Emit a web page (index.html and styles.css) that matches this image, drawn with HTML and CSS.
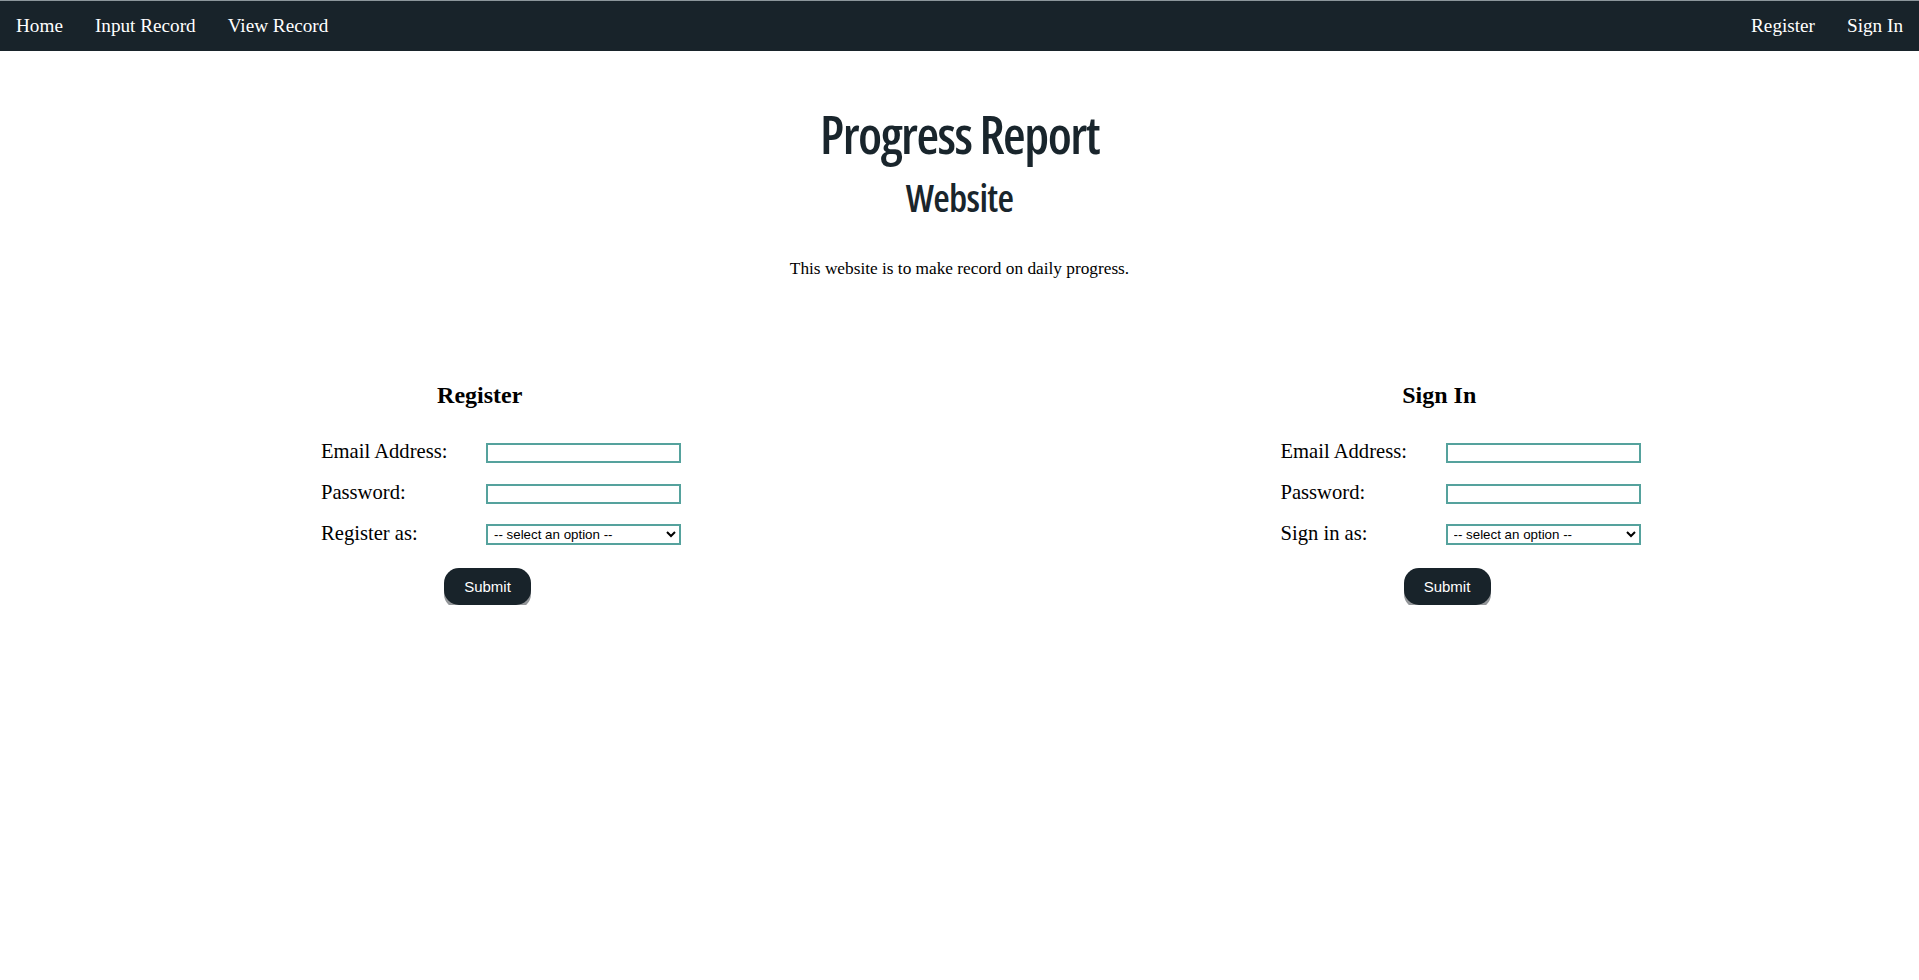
FILE: index.html
```html
<!DOCTYPE html>
<html lang="en">
<head>
<meta charset="utf-8">
<title>Progress Report Website</title>
<link rel="stylesheet" href="styles.css">
</head>
<body>
<nav class="topnav">
  <div class="nav-left">
    <a class="nav-link" href="#">Home</a>
    <a class="nav-link" href="#">Input Record</a>
    <a class="nav-link" href="#">View Record</a>
  </div>
  <div class="nav-right">
    <a class="nav-link" href="#">Register</a>
    <a class="nav-link" href="#">Sign In</a>
  </div>
</nav>

<header class="hero">
  <h1 class="hero-title">Progress Report</h1>
  <h2 class="hero-sub">Website</h2>
  <p class="hero-text">This website is to make record on daily progress.</p>
</header>

<main class="forms">
  <section class="form-col">
    <h2 class="form-title">Register</h2>
    <form class="form-grid">
      <label class="form-label">Email Address:</label>
      <input class="form-input" type="email">
      <label class="form-label">Password:</label>
      <input class="form-input" type="password">
      <label class="form-label">Register as:</label>
      <select class="form-select">
        <option>-- select an option --</option>
      </select>
      <button class="submit-btn" type="button">Submit</button>
    </form>
  </section>
  <section class="form-col">
    <h2 class="form-title">Sign In</h2>
    <form class="form-grid">
      <label class="form-label">Email Address:</label>
      <input class="form-input" type="email">
      <label class="form-label">Password:</label>
      <input class="form-input" type="password">
      <label class="form-label">Sign in as:</label>
      <select class="form-select">
        <option>-- select an option --</option>
      </select>
      <button class="submit-btn" type="button">Submit</button>
    </form>
  </section>
</main>
</body>
</html>
```

FILE: styles.css
```css
* { box-sizing: border-box; }

body {
  margin: 0;
  background: #ffffff;
  font-family: "Liberation Serif", "Times New Roman", serif;
  color: #000;
}

.topnav {
  height: 51px;
  background: #18232a;
  border-top: 1px solid #8c969b;
  display: flex;
  justify-content: space-between;
  align-items: center;
}

.nav-left, .nav-right {
  display: flex;
  align-items: center;
}

.nav-link {
  color: #ffffff;
  text-decoration: none;
  font-size: 19.2px;
  line-height: 22px;
  padding: 0 16px;
}

.hero {
  text-align: center;
  padding-top: 53px;
}

.hero-title,
.hero-sub {
  font-family: "Open Sans", "DejaVu Sans Condensed", sans-serif;
  font-stretch: 75%;
  font-weight: 600;
  color: #19252c;
}

.hero-title {
  margin: 0;
  font-size: 52px;
  line-height: 60px;
  letter-spacing: -1.5px;
}

.hero-sub {
  margin: 11px 0 0;
  font-size: 38px;
  line-height: 44px;
  letter-spacing: -0.7px;
}

.hero-text {
  margin: 40px 0 0;
  font-size: 17.3px;
  line-height: 20px;
}

.forms {
  display: flex;
  margin-top: 102px;
}

.form-col {
  flex: 1 1 50%;
}

.form-title {
  margin: 0 0 32px;
  text-align: center;
  font-size: 24px;
  line-height: 28px;
  font-weight: bold;
}

.form-grid {
  display: grid;
  grid-template-columns: 165px 195px;
  grid-auto-rows: 41px;
  align-items: start;
  padding-left: 321px;
}

.form-label {
  font-size: 20.6px;
  line-height: 20px;
}

.form-input,
.form-select {
  margin-top: 2px;
  width: 195px;
  height: 20px;
  border: 2px solid #55a29d;
  background: #fff;
  padding: 0 2px;
  outline: none;
}

.form-select {
  height: 21px;
  margin-top: 1px;
  font-family: "Liberation Sans", Arial, sans-serif;
  font-size: 13.333px;
  color: #000;
  border-radius: 0;
}

.submit-btn {
  grid-column: 1 / span 2;
  justify-self: start;
  margin-top: 4px;
  margin-left: 123px;
  width: 87px;
  height: 37px;
  border: none;
  border-radius: 15px;
  background: #18232a;
  color: #ffffff;
  font-family: "Liberation Sans", Arial, sans-serif;
  font-size: 15px;
  box-shadow: 0 4px 0 #939699;
  cursor: pointer;
}
```
